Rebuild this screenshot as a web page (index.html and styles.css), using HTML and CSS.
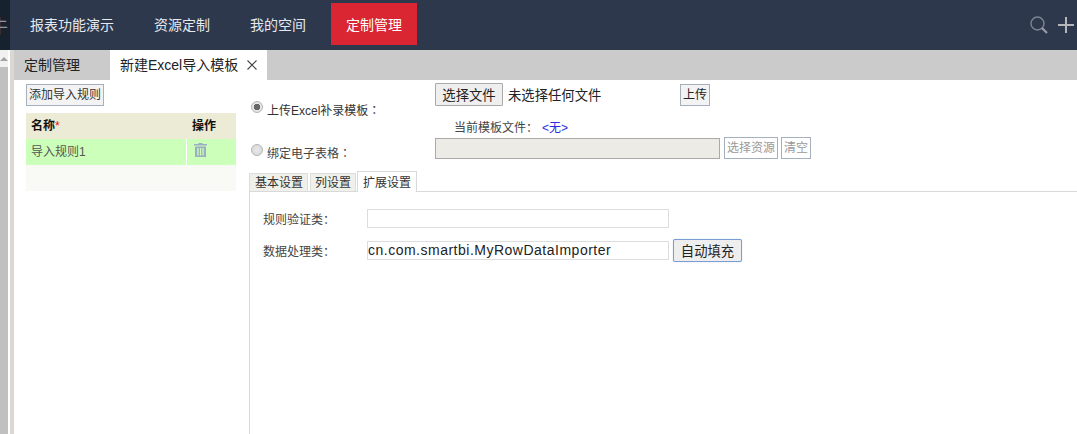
FILE: index.html
```html
<!DOCTYPE html>
<html lang="zh-CN">
<head>
<meta charset="utf-8">
<title>新建Excel导入模板</title>
<link rel="stylesheet" href="styles.css">
</head>
<body>
<header class="top">
  <div class="rail"><span class="rail-glyph">牛</span></div>
  <nav class="nav">
    <a class="nav-item">报表功能演示</a>
    <a class="nav-item">资源定制</a>
    <a class="nav-item">我的空间</a>
    <a class="nav-item active">定制管理</a>
  </nav>
  <div class="top-tools">
    <svg class="tool-icon" width="18" height="18" viewBox="0 0 18 18"><circle cx="7.500" cy="7.500" r="6.500" fill="none" stroke="#7f8591" stroke-width="1.400"/><path d="M12 12l5 5" stroke="#9a9ca3" stroke-width="2.200"/></svg>
    <svg class="tool-icon" width="16" height="16" viewBox="0 0 16 16"><path d="M0 8h16M8 0v16" stroke="#b4b6ba" stroke-width="2"/></svg>
  </div>
</header>
<div class="body">
  <aside class="scrollbar">
    <div class="scroll-up"><i class="arrow"></i></div>
    <div class="scroll-thumb"></div>
  </aside>
  <div class="splitter"></div>
  <main class="main">
    <div class="tabs">
      <div class="tab">定制管理</div>
      <div class="tab current">新建Excel导入模板<svg class="close" width="10" height="10" viewBox="0 0 10 10"><path d="M.5.5l9 9M9.500.5l-9 9" stroke="#444" stroke-width="1.100"/></svg></div>
    </div>
    <div class="content">
      <section class="rules">
        <button class="btn add">添加导入规则</button>
        <div class="table">
          <div class="row head"><div class="c-name">名称<span class="req">*</span></div><div class="c-op">操作</div></div>
          <div class="row sel"><div class="c-name">导入规则1</div><div class="c-op"><svg width="13" height="14" viewBox="0 0 13 14"><path d="M4.500 0h4v1H13v1.500H0V1h4.500z" fill="#9cadc4"/><path fill-rule="evenodd" d="M1 3.500h11V14H1zM3.300 5v7.500h1.300V5zM5.900 5v7.500h1.300V5zM8.400 5v7.500h1.300V5z" fill="#9cadc4"/></svg></div></div>
          <div class="row blank"></div>
        </div>
      </section>
      <section class="form">
        <div class="source">
          <div class="source-radios">
            <label class="radio-line first"><span class="radio on"></span>上传Excel补录模板<span class="colon">：</span></label>
            <label class="radio-line"><span class="radio"></span>绑定电子表格<span class="colon">：</span></label>
          </div>
          <div class="source-fields">
            <div class="upload-line">
              <button class="file-btn">选择文件</button><span class="file-none">未选择任何文件</span>
              <button class="btn upload">上传</button>
            </div>
            <div class="current-file">当前模板文件<span class="colon">：</span><span class="none-link">&lt;无&gt;</span></div>
            <div class="bind-line">
              <input class="bind-input" disabled>
              <button class="btn muted">选择资源</button>
              <button class="btn muted">清空</button>
            </div>
          </div>
        </div>
        <div class="subtabs">
          <div class="subtab first">基本设置</div>
          <div class="subtab">列设置</div>
          <div class="subtab current">扩展设置</div>
        </div>
        <div class="panel">
          <div class="field"><label>规则验证类<span class="colon">：</span></label><input class="text"></div>
          <div class="field"><label>数据处理类<span class="colon">：</span></label><input class="text" value="cn.com.smartbi.MyRowDataImporter"><button class="fill-btn">自动填充</button></div>
        </div>
      </section>
    </div>
  </main>
</div>
</body>
</html>
```

FILE: styles.css
```css
* { box-sizing: border-box; }
html, body { margin: 0; height: 100%; }
body {
  width: 1077px; height: 434px; overflow: hidden;
  display: flex; flex-direction: column;
  font-family: "Liberation Sans", "Noto Sans CJK SC", sans-serif;
  font-size: 12px; color: #333; background: #fff;
}
button, input { font-family: inherit; margin: 0; }
.colon { font-family: "Noto Sans CJK TC", sans-serif; }

.top { height: 50px; flex: none; display: flex; background: #2d384d; }
.rail { width: 10px; background: #18222f; overflow: hidden; position: relative; }
.rail-glyph { position: absolute; left: -10px; top: 12px; font-size: 18px; color: #8f959e; }
.nav { display: flex; gap: 10px; padding: 3px 0 5px 5px; }
.nav-item { display: flex; align-items: center; padding: 0 15px; font-size: 14px; color: #e6e9ee; }
.nav-item.active { background: #d92632; color: #fff; }
.top-tools { margin-left: auto; display: flex; align-items: center; gap: 10px; padding: 0 3px 0 0; }
.tool-icon { display: block; }

.body { flex: 1; display: flex; min-height: 0; }
.scrollbar { width: 10px; flex: none; display: flex; flex-direction: column; padding-right: 2px; background: #fff; }
.scroll-up { height: 17px; background: #f1f1f1; display: flex; justify-content: center; padding-top: 7px; }
.arrow { width: 0; height: 0; border: 4px solid transparent; border-top: 0; border-bottom: 4px solid #a3a3a3; }
.scroll-thumb { flex: 1; background: #c0c0c0; }
.splitter { width: 4px; flex: none; background: #dbd8d2; }

.main { flex: 1; min-width: 0; display: flex; flex-direction: column; }
.tabs { height: 30px; flex: none; display: flex; background: #cbcbcb; }
.tab { width: 96px; padding-left: 10px; font-size: 14px; line-height: 30px; color: #222; }
.tab.current { width: 157px; background: #fff; padding-left: 10px; display: flex; align-items: center; gap: 9px; }
.close { display: block; }

.content { flex: 1; display: flex; min-height: 0; }
.rules { width: 235px; flex: none; padding: 4px 0 0 12px; }
.btn {
  height: 22px; padding: 0 2px; border: 1px solid #a5b0bf; background: #f3f3f3;
  font-size: 12px; color: #333; line-height: 18px;
}
.add { display: block; width: 78px; white-space: nowrap; }
.table { margin-top: 7px; width: 210px; }
.row { display: flex; height: 26px; gap: 1px; }
.c-name { width: 160px; padding-left: 5px; line-height: 26px; }
.c-op { width: 49px; padding-left: 5px; line-height: 26px; }
.c-op svg { display: block; margin: 4px 0 0 2px; }
.head { background: #ecebd6; font-weight: 700; color: #111; }
.head .c-op, .head .c-name { background: #ecebd6; }
.sel { background: #fff; color: #555; }
.sel .c-name, .sel .c-op { background: #ccffb9; }
.req { color: #e11; font-weight: 400; }
.blank { background: #f9f9f6; }

.form { flex: 1; min-width: 0; display: flex; flex-direction: column; }
.source { display: flex; height: 90px; flex: none; padding-top: 3px; }
.source-radios { width: 186px; flex: none; padding: 15px 0 0 2px; }
.radio-line { display: flex; align-items: center; height: 22px; color: #444; }
.radio-line.first { margin-bottom: 21px; color: #333; }
.radio { width: 12px; height: 12px; margin-right: 4px; position: relative; top: -2px; border-radius: 50%; border: 1px solid #b5b5b5; background: radial-gradient(circle, #e9e9e9, #d5d5d5); flex: none; }
.radio.on { background: radial-gradient(circle, #666 0 3px, #e4e4e4 3.5px); }
.source-fields { flex: 1; min-width: 0; }
.upload-line { display: flex; align-items: center; height: 23px; }
.file-btn { width: 68px; height: 23px; padding: 0; border: 1px solid #a9a9a9; border-radius: 1px; background: #efefef; font-size: 13.33px; color: #222; }
.file-none { margin-left: 5px; width: 172px; font-size: 13.33px; color: #222; }
.upload { width: 30px; height: 22px; padding: 0; font-size: 12px; color: #222; }
.current-file { margin: 13px 0 0 19px; height: 16px; line-height: 16px; color: #444; }
.none-link { margin-left: 4px; color: #2a2ae0; }
.bind-line { display: flex; align-items: center; height: 22px; margin-top: 2px; gap: 4px; }
.bind-input { width: 285px; height: 21px; border: 1px solid #aaa; background: #ecebe5; padding: 0; }
.muted { color: #999; background: #fff; padding: 0 2px; height: 22px; white-space: nowrap; }
.bind-line .muted:last-child { margin-left: -1px; }

.subtabs { display: flex; height: 21px; flex: none; gap: 1px; align-items: flex-end; }
.subtab { height: 18px; padding: 0 4px; line-height: 18px; background: #f0f0ea; border: 1px solid #ddd; border-bottom: 0; color: #333; white-space: nowrap; }
.subtab.first { padding-left: 5px; margin-right: 1px; }
.subtab.current { height: 21px; padding: 0 5px; margin-bottom: -1px; position: relative; background: #fff; border-color: #d9d9d9; line-height: 22px; }
.panel { flex: 1; border: 1px solid #d9d9d9; border-width: 1px 0 0 1px; padding: 16px 0 0 13px; }
.field { display: flex; align-items: center; height: 20px; margin-bottom: 12px; }
.field label { width: 104px; flex: none; color: #444; }
.text { width: 302px; height: 19px; padding: 0; border: 1px solid #ddd; background: #fff; font-family: "Liberation Sans", sans-serif; font-size: 14px; letter-spacing: .5px; color: #222; }
.fill-btn { margin-left: 4px; width: 69px; height: 23px; padding: 0; border: 1px solid #7a9ed3; border-radius: 2px; background: #eee; font-size: 13.33px; color: #222; box-shadow: 0 0 1px #8fb4e8; }
```
